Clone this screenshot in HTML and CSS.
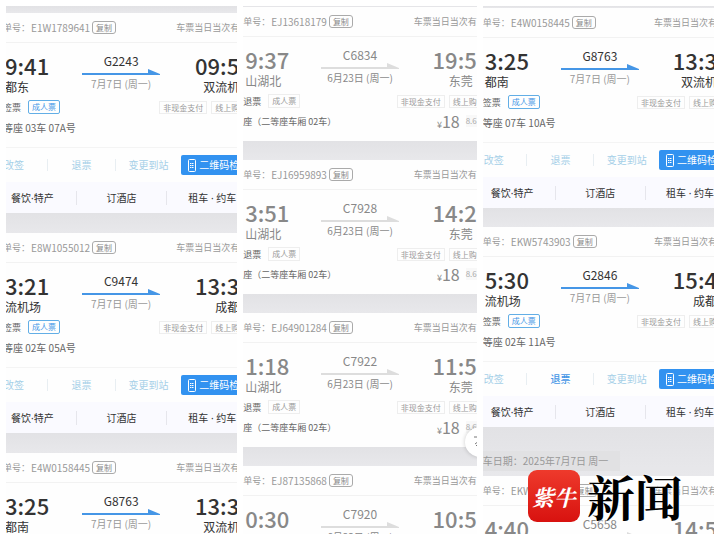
FILE: index.html
```html
<!DOCTYPE html>
<html lang="zh-CN">
<head>
    <meta charset="UTF-8">
    <meta name="viewport" content="width=device-width, initial-scale=1.0">
    <title>车票订单</title>
    <link rel="stylesheet" href="styles.css">
</head>
<body>
    <svg class="sprite" aria-hidden="true">
        <symbol id="arrow" viewBox="0 0 78 6">
            <path d="M0 4H66V0L78 5V6H0Z" fill="currentColor"/>
        </symbol>
        <symbol id="phone" viewBox="0 0 8 13">
            <rect x="0.5" y="0.5" width="7" height="12" rx="1" fill="none" stroke="currentColor"/>
            <path d="M2 4.5H6M2 6.500H6M2 8.500H6" stroke="currentColor" stroke-dasharray="1.500 0.500"/>
        </symbol>
    </svg>

    <main class="panels">

        <section class="panel">
            <div class="sheet sheet-first">
                <div class="strip strip-short"></div>

                <article class="ticket">
                    <header class="order">
                        <span>单号：</span><span class="number">E1W1789641</span>
                        <button class="copy">复制</button>
                        <span class="valid">车票当日当次有</span>
                    </header>
                    <div class="body">
                        <div class="route">
                            <div class="stop"><b class="time">9:41</b><span class="station">都东</span></div>
                            <div class="train"><span class="code">G2243</span><svg class="arrow"><use href="#arrow"/></svg><span class="date">7月7日 (周一)</span></div>
                            <div class="stop stop-end"><b class="time">09:5</b><span class="station">双流机</span></div>
                        </div>
                        <div class="row"><span class="state">签票</span><span class="tag tag-adult">成人票</span><span class="tags"><span class="tag">非现金支付</span><span class="tag tag-edge">线上购</span></span></div>
                        <div class="row seat">等座 03车 07A号</div>
                    </div>
                    <div class="actions">
                        <button>改签</button><button>退票</button><button>变更到站</button>
                        <button class="qr"><svg class="phone"><use href="#phone"/></svg>二维码检</button>
                    </div>
                    <nav class="services"><a href="#">餐饮·特产</a><a href="#">订酒店</a><a href="#">租车 · 约车</a></nav>
                </article>

                <div class="strip strip-tall"></div>

                <article class="ticket">
                    <header class="order">
                        <span>单号：</span><span class="number">E8W1055012</span>
                        <button class="copy">复制</button>
                        <span class="valid">车票当日当次有</span>
                    </header>
                    <div class="body">
                        <div class="route">
                            <div class="stop"><b class="time">3:21</b><span class="station">流机场</span></div>
                            <div class="train"><span class="code">C9474</span><svg class="arrow"><use href="#arrow"/></svg><span class="date">7月7日 (周一)</span></div>
                            <div class="stop stop-end"><b class="time">13:3</b><span class="station">成都</span></div>
                        </div>
                        <div class="row"><span class="state">签票</span><span class="tag tag-adult">成人票</span><span class="tags"><span class="tag">非现金支付</span><span class="tag tag-edge">线上购</span></span></div>
                        <div class="row seat">等座 02车 05A号</div>
                    </div>
                    <div class="actions">
                        <button>改签</button><button>退票</button><button>变更到站</button>
                        <button class="qr"><svg class="phone"><use href="#phone"/></svg>二维码检</button>
                    </div>
                    <nav class="services"><a href="#">餐饮·特产</a><a href="#">订酒店</a><a href="#">租车 · 约车</a></nav>
                </article>

                <div class="strip strip-tall"></div>

                <article class="ticket">
                    <header class="order">
                        <span>单号：</span><span class="number">E4W0158445</span>
                        <button class="copy">复制</button>
                        <span class="valid">车票当日当次有</span>
                    </header>
                    <div class="body">
                        <div class="route">
                            <div class="stop"><b class="time">3:25</b><span class="station">都南</span></div>
                            <div class="train"><span class="code">G8763</span><svg class="arrow"><use href="#arrow"/></svg><span class="date">7月7日 (周一)</span></div>
                            <div class="stop stop-end"><b class="time">13:3</b><span class="station">双流机</span></div>
                        </div>
                    </div>
                </article>
            </div>
        </section>

        <section class="panel">
            <div class="sheet sheet-middle">
                <div class="strip strip-line"></div>

                <article class="ticket muted">
                    <header class="order">
                        <span>单号：</span><span class="number">EJ13618179</span>
                        <button class="copy">复制</button>
                        <span class="valid">车票当日当次有</span>
                    </header>
                    <div class="body">
                        <div class="route">
                            <div class="stop"><b class="time">9:37</b><span class="station">山湖北</span></div>
                            <div class="train"><span class="code">C6834</span><svg class="arrow"><use href="#arrow"/></svg><span class="date">6月23日 (周一)</span></div>
                            <div class="stop stop-end"><b class="time">19:5</b><span class="station">东莞</span></div>
                        </div>
                        <div class="row"><span class="state">退票</span><span class="tag">成人票</span><span class="tags"><span class="tag">非现金支付</span><span class="tag tag-edge">线上购</span></span></div>
                        <div class="row seat">座（二等座车厢 02车）<span class="price">¥<b>18</b></span><span class="discount">8.6</span></div>
                    </div>
                </article>

                <div class="strip"></div>

                <article class="ticket muted">
                    <header class="order">
                        <span>单号：</span><span class="number">EJ16959893</span>
                        <button class="copy">复制</button>
                        <span class="valid">车票当日当次有</span>
                    </header>
                    <div class="body">
                        <div class="route">
                            <div class="stop"><b class="time">3:51</b><span class="station">山湖北</span></div>
                            <div class="train"><span class="code">C7928</span><svg class="arrow"><use href="#arrow"/></svg><span class="date">6月23日 (周一)</span></div>
                            <div class="stop stop-end"><b class="time">14:2</b><span class="station">东莞</span></div>
                        </div>
                        <div class="row"><span class="state">退票</span><span class="tag">成人票</span><span class="tags"><span class="tag">非现金支付</span><span class="tag tag-edge">线上购</span></span></div>
                        <div class="row seat">座（二等座车厢 02车）<span class="price">¥<b>18</b></span><span class="discount">8.6</span></div>
                    </div>
                </article>

                <div class="strip"></div>

                <article class="ticket muted">
                    <header class="order">
                        <span>单号：</span><span class="number">EJ64901284</span>
                        <button class="copy">复制</button>
                        <span class="valid">车票当日当次有</span>
                    </header>
                    <div class="body">
                        <div class="route">
                            <div class="stop"><b class="time">1:18</b><span class="station">山湖北</span></div>
                            <div class="train"><span class="code">C7922</span><svg class="arrow"><use href="#arrow"/></svg><span class="date">6月23日 (周一)</span></div>
                            <div class="stop stop-end"><b class="time">11:5</b><span class="station">东莞</span></div>
                        </div>
                        <div class="row"><span class="state">退票</span><span class="tag">成人票</span><span class="tags"><span class="tag">非现金支付</span><span class="tag tag-edge">线上购</span></span></div>
                        <div class="row seat">座（二等座车厢 02车）<span class="price">¥<b>18</b></span><span class="discount">8.6</span></div>
                    </div>
                </article>

                <div class="strip"></div>

                <article class="ticket muted">
                    <header class="order">
                        <span>单号：</span><span class="number">EJ87135868</span>
                        <button class="copy">复制</button>
                        <span class="valid">车票当日当次有</span>
                    </header>
                    <div class="body">
                        <div class="route">
                            <div class="stop"><b class="time">0:30</b><span class="station">山湖北</span></div>
                            <div class="train"><span class="code">C7920</span><svg class="arrow"><use href="#arrow"/></svg><span class="date">6月23日 (周一)</span></div>
                            <div class="stop stop-end"><b class="time">10:5</b><span class="station">东莞</span></div>
                        </div>
                    </div>
                </article>
            </div>
            <button class="float" aria-label="分享">
                <svg viewBox="0 0 30 30" width="30" height="30"><path d="M9 10H14M10 17L14 14M11 19L13 17" fill="none" stroke="#777" stroke-width="1"/></svg>
            </button>
        </section>

        <section class="panel">
            <div class="sheet sheet-last">
                <div class="strip strip-line"></div>

                <article class="ticket">
                    <header class="order">
                        <span>单号：</span><span class="number">E4W0158445</span>
                        <button class="copy">复制</button>
                        <span class="valid">车票当日当次有</span>
                    </header>
                    <div class="body">
                        <div class="route">
                            <div class="stop"><b class="time">3:25</b><span class="station">都南</span></div>
                            <div class="train"><span class="code">G8763</span><svg class="arrow"><use href="#arrow"/></svg><span class="date">7月7日 (周一)</span></div>
                            <div class="stop stop-end"><b class="time">13:3</b><span class="station">双流机</span></div>
                        </div>
                        <div class="row"><span class="state">签票</span><span class="tag tag-adult">成人票</span><span class="tags"><span class="tag">非现金支付</span><span class="tag tag-edge">线上购</span></span></div>
                        <div class="row seat">等座 07车 10A号</div>
                    </div>
                    <div class="actions">
                        <button>改签</button><button>退票</button><button>变更到站</button>
                        <button class="qr"><svg class="phone"><use href="#phone"/></svg>二维码检</button>
                    </div>
                    <nav class="services"><a href="#">餐饮·特产</a><a href="#">订酒店</a><a href="#">租车 · 约车</a></nav>
                </article>

                <div class="strip"></div>

                <article class="ticket">
                    <header class="order">
                        <span>单号：</span><span class="number">EKW5743903</span>
                        <button class="copy">复制</button>
                        <span class="valid">车票当日当次有</span>
                    </header>
                    <div class="body">
                        <div class="route">
                            <div class="stop"><b class="time">5:30</b><span class="station">流机场</span></div>
                            <div class="train"><span class="code">G2846</span><svg class="arrow"><use href="#arrow"/></svg><span class="date">7月7日 (周一)</span></div>
                            <div class="stop stop-end"><b class="time">15:4</b><span class="station">成都</span></div>
                        </div>
                        <div class="row"><span class="state">签票</span><span class="tag tag-adult">成人票</span><span class="tags"><span class="tag">非现金支付</span><span class="tag tag-edge">线上购</span></span></div>
                        <div class="row seat">等座 02车 11A号</div>
                    </div>
                    <div class="actions">
                        <button>改签</button><button class="enabled">退票</button><button>变更到站</button>
                        <button class="qr"><svg class="phone"><use href="#phone"/></svg>二维码检</button>
                    </div>
                    <nav class="services"><a href="#">餐饮·特产</a><a href="#">订酒店</a><a href="#">租车 · 约车</a></nav>
                </article>

                <div class="strip strip-date"><span>车日期：2025年7月7日 周一</span></div>

                <article class="ticket muted">
                    <header class="order">
                        <span>单号：</span><span class="number">EKW5743903</span>
                        <button class="copy">复制</button>
                        <span class="valid">车票当日当次有</span>
                    </header>
                    <div class="body">
                        <div class="route">
                            <div class="stop"><b class="time">4:40</b></div>
                            <div class="train"><span class="code">C5658</span><svg class="arrow"><use href="#arrow"/></svg></div>
                            <div class="stop stop-end"><b class="time">14:5</b></div>
                        </div>
                    </div>
                </article>
            </div>
        </section>

        <div class="brand">
            <span class="logo">紫牛</span>
            <span class="news">新闻</span>
        </div>
    </main>
</body>
</html>
```

FILE: styles.css
```css
*{
    box-sizing: border-box;
}
body{
    margin: 0;
    background-color: #fff;
    color: #333;
    font-family: "Noto Sans CJK SC", "Noto Sans", sans-serif;
    font-size: 10px;
}
button{
    margin: 0;
    padding: 0;
    border: 0;
    background: none;
    font-family: inherit;
}
.sprite{
    position: absolute;
    width: 0;
    height: 0;
}
.panels{
    position: relative;
    display: grid;
    grid-template-columns: 1fr 1.01fr 1fr;
    gap: 6px;
    height: 100vh;
    padding: 6px;
}
.panel{
    position: relative;
    overflow: hidden;
    background-color: #fefefe;
}

/* the sheets run a little past the edges of their panel */
.sheet{
    white-space: nowrap;
}
.sheet-first{
    margin: 0 -2px 0 -3px;
}
.sheet-last{
    margin-right: -3px;
}

.strip{
    height: 19px;
    background: linear-gradient(#e2e2e5, #e8e8eb);
}
.strip-short{
    height: 7px;
}
.strip-tall{
    height: 20px;
}
.strip-line{
    height: 2px;
}
.sheet-middle .strip-line{
    height: 1px;
}
.strip-date{
    display: flex;
    align-items: flex-end;
    height: 49px;
    padding-bottom: 5px;
    color: #999;
}
.strip-date span{
    padding-right: 12px;
    line-height: 20px;
    background-color: #e1e1e3;
}

.order{
    display: flex;
    align-items: center;
    height: 30px;
    border-bottom: 1px solid #f2f2f2;
    color: #999;
    font-size: 9px;
}
.number{
    margin-left: 1px;
    font-size: 10px;
}
.copy{
    height: 13px;
    margin-left: 2px;
    padding: 0 3px;
    border: 1px solid #aaa;
    border-radius: 3px;
    color: #888;
    font-size: 8px;
    line-height: 10px;
}
.valid{
    margin-left: auto;
}

.body{
    height: 104px;
    padding-top: 10px;
}
.route{
    display: grid;
    grid-template-columns: 1fr 78px 1fr;
}
.stop{
    display: flex;
    flex-direction: column;
    padding-left: 2px;
}
.time{
    font-size: 22px;
    font-weight: 500;
    line-height: 24px;
}
.station{
    font-size: 12px;
    line-height: 20px;
}
.stop-end{
    justify-self: end;
    text-align: right;
}
.train{
    display: flex;
    flex-direction: column;
    align-items: center;
}
.code{
    font-size: 12px;
    line-height: 16px;
}
.arrow{
    width: 78px;
    height: 6px;
    color: #4596e6;
}
.date{
    color: #999;
    line-height: 18px;
}
.row{
    display: flex;
    align-items: center;
    height: 20px;
}
.state{
    color: #666;
    font-size: 9px;
}
.tag{
    height: 13px;
    padding: 0 3px;
    border: 1px solid #eee;
    color: #999;
    font-size: 8px;
    line-height: 11px;
}
.tag-edge{
    padding-right: 0;
    border-right: 0;
}
.state + .tag{
    height: 14px;
    margin-left: 7px;
    line-height: 12px;
}
.state + .tag-adult{
    border-color: #62aee6;
    border-radius: 2px;
    color: #4596e6;
}
.tags{
    display: flex;
    gap: 4px;
    margin-left: auto;
}
.seat{
    color: #666;
}

.actions{
    display: grid;
    grid-template-columns: 18fr 27fr 26fr 23fr;
    align-items: center;
    height: 35px;
    border-top: 1px solid #f4f4f4;
}
.actions button{
    height: 12px;
    border-right: 1px solid #e8eef2;
    color: #a6d0e8;
    font-size: 10px;
    line-height: 12px;
}
.actions button:first-child{
    padding-left: 1px;
    text-align: left;
}
.actions button:nth-child(3){
    border-right: 0;
}
.actions .enabled{
    color: #4596e6;
    font-weight: 500;
}
.actions .qr{
    display: flex;
    align-items: center;
    gap: 3px;
    height: 20px;
    padding-left: 7px;
    border: 0;
    border-radius: 2px 0 0 2px;
    background-color: #3292f0;
    color: #fff;
}
.phone{
    flex: none;
    width: 8px;
    height: 13px;
}
.services{
    display: grid;
    grid-template-columns: 37fr 45fr 36fr;
    align-items: center;
    height: 31px;
    background-color: #fafaff;
    font-family: "Noto Sans", "Noto Sans CJK SC", sans-serif;
}
.services a{
    border-right: 1px solid #e6e6ec;
    color: #333;
    line-height: 14px;
    text-align: center;
    text-decoration: none;
}
.services a:first-child{
    padding-left: 8px;
    text-align: left;
}
.services a:last-child{
    padding-right: 3px;
    border-right: 0;
    text-align: right;
}

.muted{
    color: #888;
}
.muted .arrow{
    color: #ddd;
}
.muted .date{
    color: #888;
}
.muted .stop-end .station{
    padding-right: 4px;
}
.muted .seat{
    font-size: 9px;
}
.price{
    margin-left: auto;
    color: #888;
}
.price b{
    font-size: 16px;
    font-weight: 400;
}
.discount{
    margin-left: 6px;
    background-color: #f8f8f8;
    color: #aaa;
    font-size: 8px;
    line-height: 12px;
}
.float{
    position: absolute;
    top: 421px;
    right: -18px;
    width: 30px;
    height: 30px;
    border-radius: 50%;
    background-color: #fff;
    box-shadow: 0 0 4px rgba(0, 0, 0, 0.2);
}

/* brand mark over the last panel */
.brand{
    position: absolute;
    right: 37px;
    bottom: 18px;
    display: flex;
    align-items: center;
    gap: 7px;
}
.logo{
    display: flex;
    align-items: center;
    justify-content: center;
    width: 52px;
    height: 52px;
    border-radius: 9px;
    background: linear-gradient(#ee3a2c, #d8120f);
    color: #fff;
    font-family: "Noto Serif CJK SC", "Noto Sans CJK SC", serif;
    font-size: 22px;
    font-style: italic;
    font-weight: 700;
}
.news{
    color: #000;
    font-family: "Noto Serif CJK SC", "Noto Sans CJK SC", serif;
    font-size: 48px;
    font-weight: 700;
    line-height: 48px;
    text-shadow: 0 0 2px #fff, 0 0 2px #fff;
}
```
